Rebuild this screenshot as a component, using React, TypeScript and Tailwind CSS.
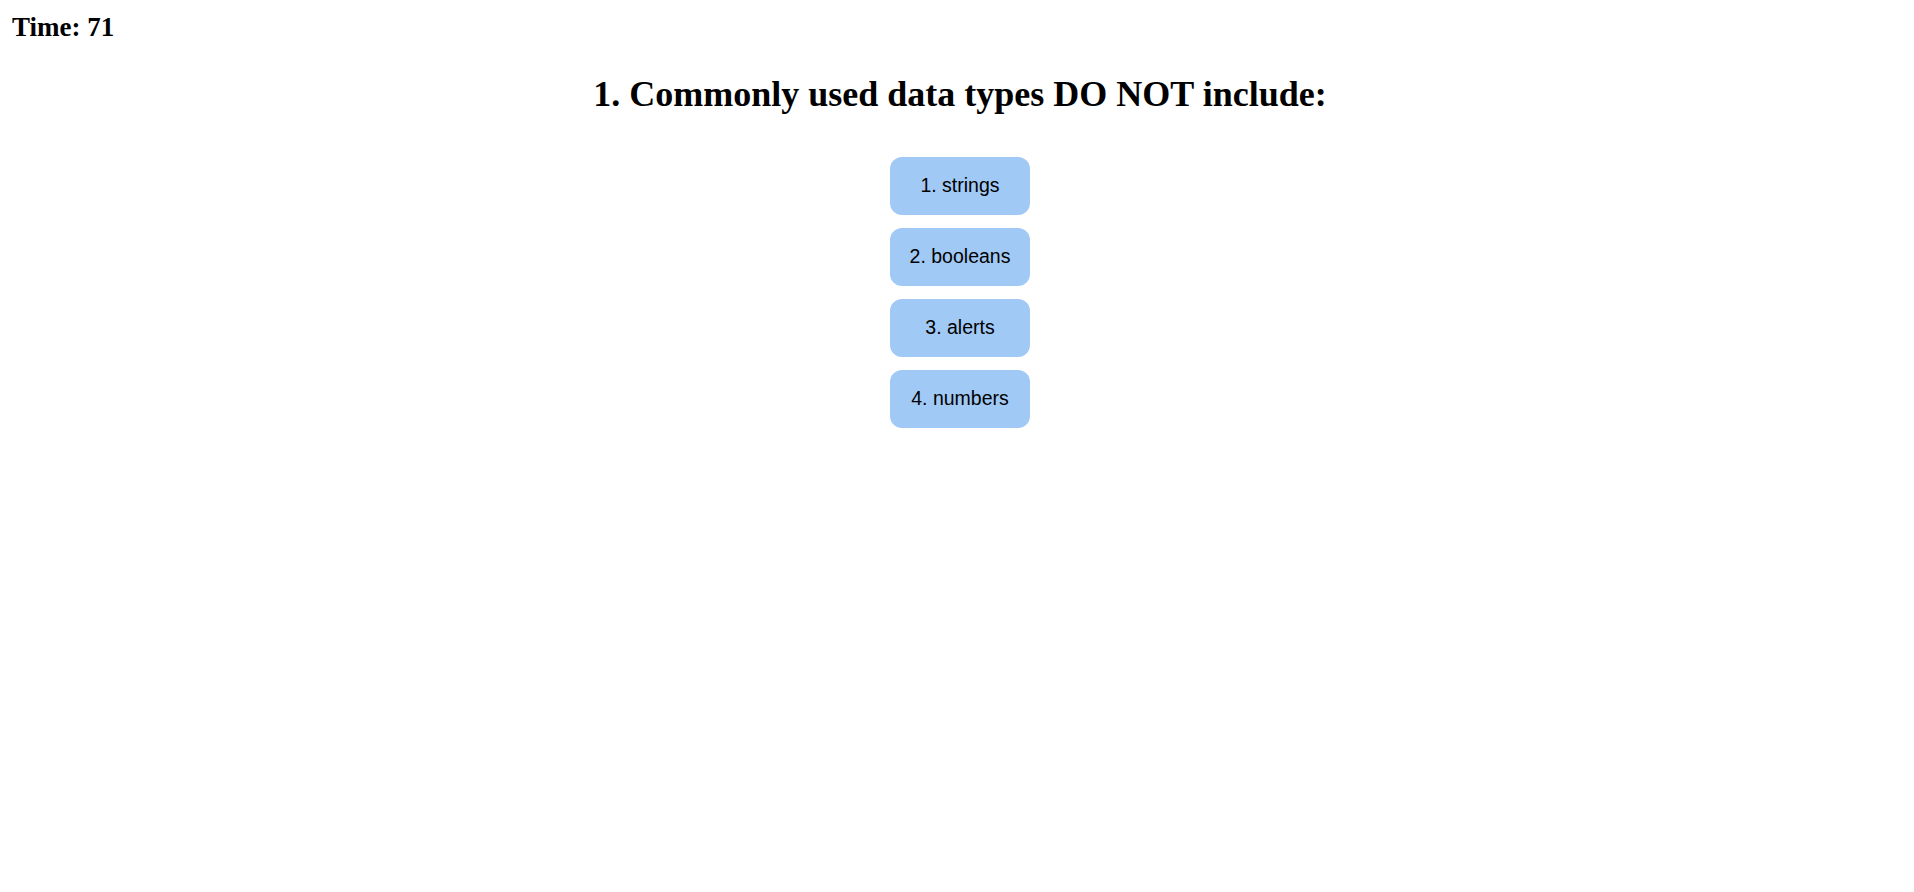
const choices = ["1. strings", "2. booleans", "3. alerts", "4. numbers"];

export default function App() {
  return (
    <div className="min-h-screen bg-white text-black">
      <header className="px-[12px] pt-[12px]">
        <h2 className="font-['Liberation_Serif',serif] text-[27px] font-bold leading-[30px]">Time: 71</h2>
      </header>
      <main className="flex flex-col items-center pl-[6px]">
        <h1 className="mt-[31px] font-['Liberation_Serif',serif] text-[36px] font-bold leading-[42px]">
          1. Commonly used data types DO NOT include:
        </h1>
        <div className="mt-[42px] flex flex-col items-center gap-[13px]">
          {choices.map((c) => (
            <button
              key={c}
              className="h-[58px] w-[140px] rounded-[12px] bg-[#a0c9f5] font-['Liberation_Sans',sans-serif] text-[19.5px] text-black"
            >
              {c}
            </button>
          ))}
        </div>
      </main>
    </div>
  );
}
